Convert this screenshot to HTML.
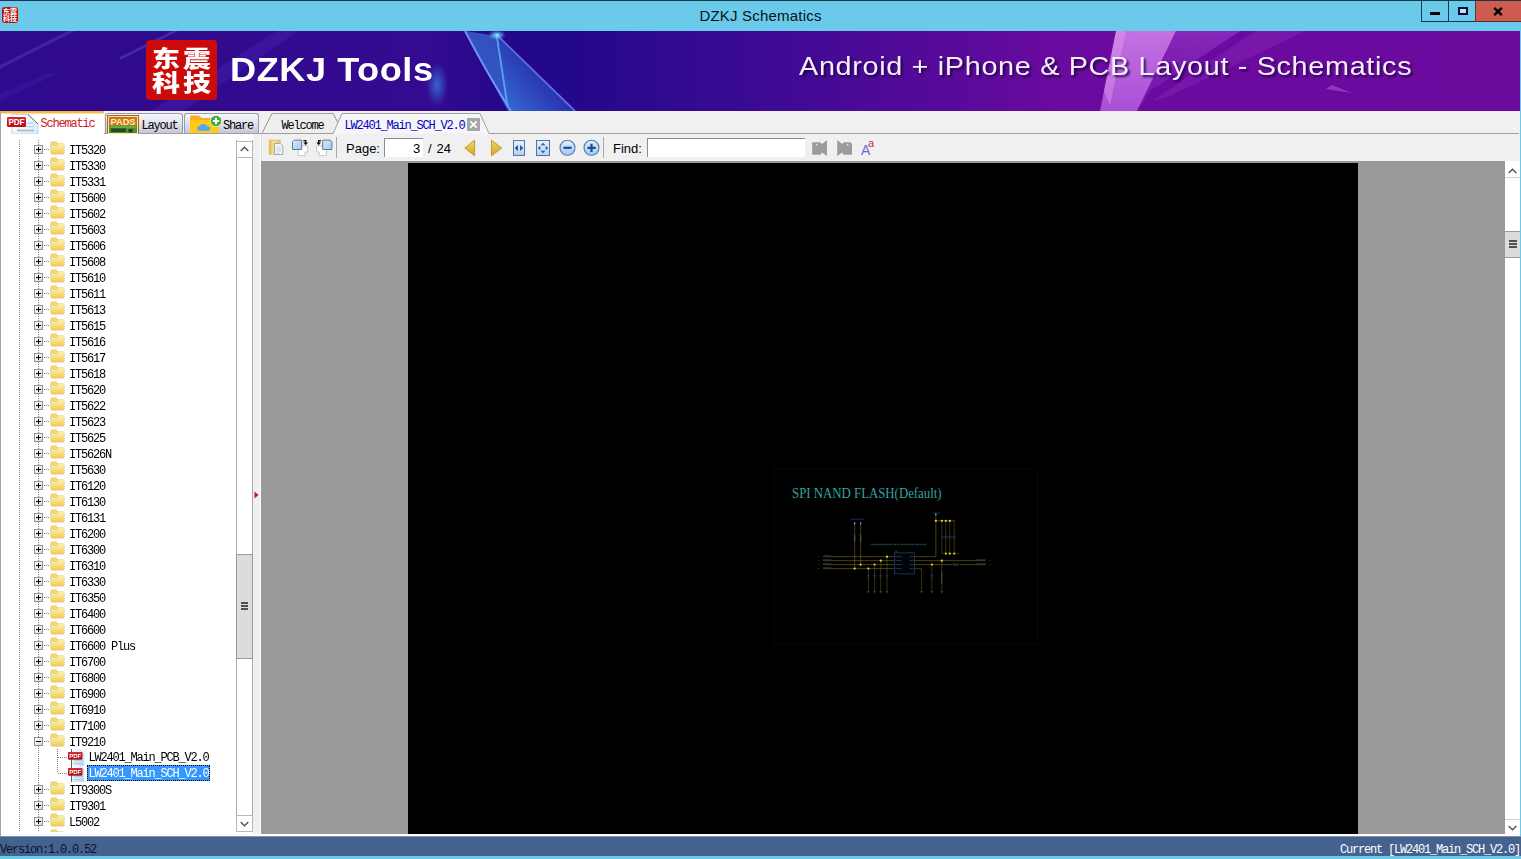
<!DOCTYPE html>
<html><head><meta charset="utf-8"><title>DZKJ Schematics</title>
<style>
html,body{margin:0;padding:0}
body{width:1521px;height:859px;overflow:hidden;position:relative;background:#6bc9ea;font-family:"Liberation Sans",sans-serif}
.abs,#main>*,#tree>*,.row>*{position:absolute}
i{display:block;font-style:normal}
svg{display:block;overflow:visible}
#frame-top{left:0;top:0;width:1521px;height:1px;background:#16394a}
#title{left:0;top:0;width:1521px;height:31px;line-height:31.5px;text-align:center;font-size:15px;letter-spacing:.2px;color:#04141c}
#appicon{left:2px;top:7px;width:16px;height:16px;box-sizing:border-box;padding-top:1px;border-radius:3px;background:#b5100d;color:#fff;font:bold 7px/7px "Liberation Sans","Noto Sans CJK SC",sans-serif;text-align:center;overflow:hidden}
#wbtn{left:1421px;top:1px;width:98px;height:21px}
#banner{left:0;top:31px;width:1519.6px;height:80px;overflow:hidden;background:linear-gradient(90deg,#2e0a8c 0%,#340a90 28%,#24088a 33%,#24088a 38%,#340a90 46%,#420a94 53%,#580a9a 62.5%,#6a0a9e 70%,#6c0a9e 100%)}
#main{left:0;top:111px;width:1519.6px;height:725px;background:#f0f0f0}
#status{left:0;top:836px;width:1521px;height:20px;background:#45628f;box-shadow:inset 0 1px 0 #7f94b4,inset 0 -1px 0 #3c6a8c}
.mono{font-family:"Liberation Mono",monospace;font-size:12px;letter-spacing:-1.2px;white-space:pre}
#status span{position:absolute;top:6px;line-height:16px}
/* left tabs */
.ltab{top:2px;height:20px;box-sizing:border-box;border:1px solid #9a9aa8;border-bottom:none;border-radius:3px 3px 0 0;background:linear-gradient(#f6f6fb,#e4e4ee 45%,#c6c6da)}
.ltab span,.dtab span{position:absolute;line-height:16px}
#tab1{left:0;top:0;width:104px;height:23px;background:linear-gradient(#f8ad38 0,#fcbc4a 2px,#ffe4a8 2.6px,#fff 3.2px);border:none;border-radius:0}
/* tree */
#treebg{left:1px;top:23px;width:252px;height:702px;background:#fff}
#tree{left:1px;top:29px;width:252px;height:692px;overflow:hidden;will-change:transform}
.row{left:0;height:16px;width:236px}
.bx{left:33px;top:3px;width:9px;height:9px;box-sizing:border-box;border:1px solid #919191;background:linear-gradient(135deg,#fff,#d8d8d8)}
.bx:before{content:"";position:absolute;left:1px;top:3px;width:5px;height:1px;background:#000}
.plus:after{content:"";position:absolute;left:3px;top:1px;width:1px;height:5px;background:#000}
.hd{left:43px;top:7px;width:6px;height:1px;background:repeating-linear-gradient(90deg,#808080 0 1px,transparent 1px 2px)}
.hd2{left:57px;top:7px;width:10px;height:1px;background:repeating-linear-gradient(90deg,#808080 0 1px,transparent 1px 2px)}
.fo{left:49.6px;top:1.8px;width:13px;height:9.9px;border-radius:1px;background:linear-gradient(#fcf0ae,#f6df80 55%,#eecb5a);box-shadow:0 0 0 .5px #e2c662}
.fo:before{content:"";position:absolute;left:0;top:-1.9px;width:6.4px;height:2.6px;border-radius:1px 1.6px 0 0;background:#f0d878;box-shadow:0 0 0 .5px #e2c662}
.pi{left:67px;top:-1px;width:17px;height:17px}
.lb{left:68px;top:1px;line-height:16px;font-family:"Liberation Mono",monospace;font-size:12px;letter-spacing:-1.2px;white-space:pre;color:#000}
.lb2{left:86px;top:-1px;height:16px;line-height:18px;padding:0 1px 0 1.5px;font-family:"Liberation Mono",monospace;font-size:12px;letter-spacing:-1.2px;white-space:pre;color:#000}
.sel{background:#3399ff;color:#fff;outline:1px dotted #000;outline-offset:-1px}
.vd{width:1px;background:repeating-linear-gradient(180deg,#808080 0 1px,transparent 1px 2px)}

#logo{left:146px;top:9px;width:71px;height:60px;border-radius:4px;background:#cc0a0a;color:#fff;font:900 28px/28px "Liberation Sans","Noto Sans CJK SC",sans-serif;text-align:center}
#logo span{display:block;position:absolute;left:0;width:71px;height:28px;white-space:nowrap;letter-spacing:3px;text-indent:3px;transform:scaleY(.8);transform-origin:50% 50%}
#bt1{left:230px;top:17px;font:bold 33px/44px "Liberation Sans",sans-serif;color:#fff;letter-spacing:.5px;white-space:nowrap;transform:scaleX(1.095);transform-origin:0 0}
#bt2,#bt2s{left:799px;top:14.5px;font:26px/40px "Liberation Sans",sans-serif;color:#f6ecfb;white-space:nowrap;letter-spacing:.6px;transform:scaleX(1.108);transform-origin:0 0}
#bt2s{color:#1a0440;left:801px;top:16.5px;filter:blur(1.2px);opacity:.9}
#tb{left:262px;top:23px;width:1257.6px;height:27px;background:#f0f0f0}
#tb>*{position:absolute}
.tx{top:7px;font:13px/16px "Liberation Sans",sans-serif;color:#000;white-space:nowrap}
#viewer{left:262px;top:50px;width:1257.6px;height:673px;background:#999;overflow:hidden}
#viewer>*{position:absolute}
#page{left:146px;top:2px;width:950px;height:680px;background:#000}
#main>i.wl{background:#fff}
</style></head>
<body>
<svg width="0" height="0" style="position:absolute">
<defs>
<linearGradient id="gfo" x1="0" y1="0" x2="0" y2="1"><stop offset="0" stop-color="#fcf0ae"/><stop offset=".55" stop-color="#f6df80"/><stop offset="1" stop-color="#eecb5a"/></linearGradient>
<linearGradient id="gpg2" x1="0" y1="0" x2="1" y2="1"><stop offset="0" stop-color="#ffffff"/><stop offset="1" stop-color="#ddecf8"/></linearGradient>
<linearGradient id="gpg" x1="0" y1="0" x2="1" y2="1"><stop offset="0" stop-color="#ffffff"/><stop offset="1" stop-color="#b8d8f4"/></linearGradient>
</defs>
</svg>

<div class="abs" id="title">DZKJ Schematics</div>
<div class="abs" id="frame-top"></div>
<div class="abs" id="appicon">东震<br>科技</div>
<div class="abs" id="wbtn">
<i class="abs" style="left:0;top:0;width:28px;height:21px;box-sizing:border-box;border:1px solid #0c3a52;border-top:none"></i>
<i class="abs" style="left:27px;top:0;width:28px;height:21px;box-sizing:border-box;border:1px solid #0c3a52;border-top:none"></i>
<i class="abs" style="left:54px;top:0;width:46px;height:21px;box-sizing:border-box;background:#cf5a4e;border-bottom:1px solid #5a2a24;border-left:1px solid #5a3a34"></i>
<i class="abs" style="left:9px;top:11px;width:10px;height:3px;background:#000"></i>
<i class="abs" style="left:37px;top:6px;width:10px;height:8px;box-sizing:border-box;border:2px solid #0a0a3a;background:#bfe4f4"></i>
<svg class="abs" style="left:72px;top:6px" width="10" height="9" viewBox="0 0 10 9"><path d="M1.2 .8 L8.8 8.2 M8.8 .8 L1.2 8.2" stroke="#000" stroke-width="2.4"/></svg>
</div>
<div class="abs" id="banner">
<svg class="abs" style="left:0;top:0" width="1519" height="80" viewBox="0 0 1519 80">
<defs>
<linearGradient id="bm1" x1="0" y1="0" x2="0" y2="1"><stop offset="0" stop-color="#3a80e0" stop-opacity=".6"/><stop offset="1" stop-color="#3a78e0" stop-opacity=".7"/></linearGradient>
<linearGradient id="bm2" x1="0" y1="1" x2="1" y2=".2"><stop offset="0" stop-color="#3a8ae8" stop-opacity=".85"/><stop offset=".55" stop-color="#2c4cc4" stop-opacity=".7"/><stop offset="1" stop-color="#2a30b0" stop-opacity=".3"/></linearGradient>
<linearGradient id="pk1" x1="0" y1="0" x2="0" y2="1"><stop offset="0" stop-color="#d484ee" stop-opacity=".85"/><stop offset="1" stop-color="#b25ce0" stop-opacity=".85"/></linearGradient>
<linearGradient id="pk2" x1="0" y1="0" x2="0" y2="1"><stop offset="0" stop-color="#a040d0" stop-opacity=".55"/><stop offset="1" stop-color="#8a2ac0" stop-opacity=".25"/></linearGradient>
<radialGradient id="glow"><stop offset="0" stop-color="#3a8ae8" stop-opacity=".7"/><stop offset="1" stop-color="#3a8ae8" stop-opacity="0"/></radialGradient>
<radialGradient id="spark"><stop offset="0" stop-color="#9af0ff" stop-opacity="1"/><stop offset="1" stop-color="#4ac0ff" stop-opacity="0"/></radialGradient>
<filter id="tsh" x="-5%" y="-20%" width="110%" height="150%"><feGaussianBlur stdDeviation="1.2"/></filter>
</defs>
<polygon points="277,0 298,0 183,80 150,80" fill="#5a3ad8" opacity=".22"/>
<polygon points="0,34 0,38 75,0 68,0" fill="#6a5ae0" opacity=".3"/>
<polygon points="120,26 120,29 178,0 172,0" fill="#7a6ae8" opacity=".3"/>
<polygon points="0,62 0,70 60,42 48,42" fill="#5a3ad8" opacity=".15"/>
<ellipse cx="437" cy="54" rx="11" ry="22" fill="url(#glow)"/>
<polygon points="465,0 497,5 507,74 512,80 508,80" fill="url(#bm1)"/>
<polygon points="497,5 575,80 512,80 506,72" fill="url(#bm2)"/>
<path d="M465 0 Q488 44 511 80" stroke="#7a9cf8" stroke-width="2" fill="none" opacity=".9"/>
<path d="M496.5 3 L507.5 75" stroke="#5aa8f8" stroke-width="1.8" fill="none" opacity=".9"/>
<path d="M497 4 L575 80" stroke="#6a7cf0" stroke-width="1.8" fill="none" opacity=".85"/>
<ellipse cx="497" cy="4" rx="9" ry="5" fill="url(#spark)"/>
<polygon points="1116,0 1176,0 1137,80 1100,80" fill="url(#pk1)"/>
<polygon points="1176,0 1240,0 1150,60 1137,80" fill="url(#pk2)"/>
<polygon points="1255,0 1305,0 1168,66 1152,70" fill="#9a3ac8" opacity=".28"/>
<polygon points="1326,58 1352,62 1332,54" fill="#b050d8" opacity=".6"/>
<polygon points="1104,60 1116,0 1126,0 1110,74" fill="#e8b0f4" opacity=".35"/>
</svg>
<i class="abs" id="logo"><span style="top:6px">东震</span><span style="top:30px">科技</span></i>
<div class="abs" id="bt1">DZKJ Tools</div>
<div class="abs" id="bt2s">Android + iPhone &amp; PCB Layout - Schematics</div>
<div class="abs" id="bt2">Android + iPhone &amp; PCB Layout - Schematics</div>
</div>
<div class="abs" id="main">
<i style="left:104px;top:22px;width:156px;height:1px;background:#a0a0a8"></i>
<div id="tab1" class="ltab" style="box-sizing:border-box"><svg class="abs" style="left:6px;top:2px" width="34" height="22" viewBox="0 0 34 22">
<path d="M6 1.5 H22 L32 11 V21 H6 Z" fill="url(#gpg2)" stroke="#c4d4e4" stroke-width="1"/>
<path d="M22 1.5 L32 11" stroke="#5a6a7a" stroke-width="1"/>
<path d="M21 10h7M19 13.5h9" stroke="#b4daf2" stroke-width="1.6"/><path d="M11 17.5h17" stroke="#a8b8c8" stroke-width="1.6"/>
<rect x="1" y="4" width="19" height="10" rx="1.5" fill="#c01018"/>
<rect x="1" y="4" width="19" height="4" rx="1.5" fill="#d83038" opacity=".7"/>
<text x="10.5" y="12.3" font-family="Liberation Sans,sans-serif" font-size="9" font-weight="bold" fill="#fff" text-anchor="middle" textLength="16" lengthAdjust="spacingAndGlyphs">PDF</text>
</svg><span class="mono" style="left:40.5px;top:5px;color:#c8202a">Schematic</span></div>
<div id="tab2" class="ltab" style="left:105px;width:78px"><svg class="abs" style="left:1px;top:1px" width="32" height="18" viewBox="0 0 32 18">
<rect x="0" y="0" width="32" height="18" fill="#b4601a"/>
<rect x="1.5" y="1.5" width="29" height="17" fill="#d2741e" stroke="#f7e6a0" stroke-width="1"/>
<rect x="2" y="10.6" width="28" height="7.4" fill="#4c9432"/>
<rect x="4" y="13.4" width="15" height="3.6" fill="#25482a"/><rect x="21.5" y="14" width="4" height="3.4" fill="#1e3a22"/>
<path d="M3 12h26" stroke="#7cc45a" stroke-width="1"/>
<text x="16" y="10" font-family="Liberation Sans,sans-serif" font-size="9.5" font-weight="bold" fill="#fdf2b4" text-anchor="middle" textLength="25" lengthAdjust="spacingAndGlyphs">PADS</text>
</svg><span class="mono" style="left:35.5px;top:4px;color:#000">Layout</span></div>
<div id="tab3" class="ltab" style="left:184px;width:75px"><svg class="abs" style="left:4px;top:0px" width="34" height="19" viewBox="0 0 34 19">
<path d="M1 3 Q1 1.5 2.5 1.5 H10 L12.5 4 H28 Q29.5 4 29.5 5.5 V19 H1 Z" fill="#f9ae22"/>
<path d="M1 6 H29.5 V19 H1 Z" fill="#ffca1c"/>
<path d="M10.5 16.8 Q8 16.8 8 14.6 Q8 12.8 10.2 12.6 Q11 10 14.2 10 Q17.4 10 18.2 12.4 Q21.2 12.4 21.2 14.6 Q21.2 16.8 18.8 16.8 Z" fill="#4ea6f4"/>
<circle cx="27" cy="7" r="5.6" fill="#3aa83c" stroke="#e8f4e0" stroke-width=".8"/>
<path d="M27 3.8v6.4M23.8 7h6.4" stroke="#fff" stroke-width="2"/>
</svg><span class="mono" style="left:38px;top:4px;color:#000">Share</span></div>
<i id="treebg"></i>
<i style="left:0;top:1px;width:1px;height:724px;background:#9ca6ae;z-index:3"></i>
<div id="tree">
<i class="vd" style="left:18px;top:0px;height:693px"></i>
<i class="vd" style="left:37px;top:0px;height:693px"></i>
<div class="row" style="top:2px"><i class="hd"></i><i class="bx plus"></i><i class="fo"></i><span class="lb">IT5320</span></div>
<div class="row" style="top:18px"><i class="hd"></i><i class="bx plus"></i><i class="fo"></i><span class="lb">IT5330</span></div>
<div class="row" style="top:34px"><i class="hd"></i><i class="bx plus"></i><i class="fo"></i><span class="lb">IT5331</span></div>
<div class="row" style="top:50px"><i class="hd"></i><i class="bx plus"></i><i class="fo"></i><span class="lb">IT5600</span></div>
<div class="row" style="top:66px"><i class="hd"></i><i class="bx plus"></i><i class="fo"></i><span class="lb">IT5602</span></div>
<div class="row" style="top:82px"><i class="hd"></i><i class="bx plus"></i><i class="fo"></i><span class="lb">IT5603</span></div>
<div class="row" style="top:98px"><i class="hd"></i><i class="bx plus"></i><i class="fo"></i><span class="lb">IT5606</span></div>
<div class="row" style="top:114px"><i class="hd"></i><i class="bx plus"></i><i class="fo"></i><span class="lb">IT5608</span></div>
<div class="row" style="top:130px"><i class="hd"></i><i class="bx plus"></i><i class="fo"></i><span class="lb">IT5610</span></div>
<div class="row" style="top:146px"><i class="hd"></i><i class="bx plus"></i><i class="fo"></i><span class="lb">IT5611</span></div>
<div class="row" style="top:162px"><i class="hd"></i><i class="bx plus"></i><i class="fo"></i><span class="lb">IT5613</span></div>
<div class="row" style="top:178px"><i class="hd"></i><i class="bx plus"></i><i class="fo"></i><span class="lb">IT5615</span></div>
<div class="row" style="top:194px"><i class="hd"></i><i class="bx plus"></i><i class="fo"></i><span class="lb">IT5616</span></div>
<div class="row" style="top:210px"><i class="hd"></i><i class="bx plus"></i><i class="fo"></i><span class="lb">IT5617</span></div>
<div class="row" style="top:226px"><i class="hd"></i><i class="bx plus"></i><i class="fo"></i><span class="lb">IT5618</span></div>
<div class="row" style="top:242px"><i class="hd"></i><i class="bx plus"></i><i class="fo"></i><span class="lb">IT5620</span></div>
<div class="row" style="top:258px"><i class="hd"></i><i class="bx plus"></i><i class="fo"></i><span class="lb">IT5622</span></div>
<div class="row" style="top:274px"><i class="hd"></i><i class="bx plus"></i><i class="fo"></i><span class="lb">IT5623</span></div>
<div class="row" style="top:290px"><i class="hd"></i><i class="bx plus"></i><i class="fo"></i><span class="lb">IT5625</span></div>
<div class="row" style="top:306px"><i class="hd"></i><i class="bx plus"></i><i class="fo"></i><span class="lb">IT5626N</span></div>
<div class="row" style="top:322px"><i class="hd"></i><i class="bx plus"></i><i class="fo"></i><span class="lb">IT5630</span></div>
<div class="row" style="top:338px"><i class="hd"></i><i class="bx plus"></i><i class="fo"></i><span class="lb">IT6120</span></div>
<div class="row" style="top:354px"><i class="hd"></i><i class="bx plus"></i><i class="fo"></i><span class="lb">IT6130</span></div>
<div class="row" style="top:370px"><i class="hd"></i><i class="bx plus"></i><i class="fo"></i><span class="lb">IT6131</span></div>
<div class="row" style="top:386px"><i class="hd"></i><i class="bx plus"></i><i class="fo"></i><span class="lb">IT6200</span></div>
<div class="row" style="top:402px"><i class="hd"></i><i class="bx plus"></i><i class="fo"></i><span class="lb">IT6300</span></div>
<div class="row" style="top:418px"><i class="hd"></i><i class="bx plus"></i><i class="fo"></i><span class="lb">IT6310</span></div>
<div class="row" style="top:434px"><i class="hd"></i><i class="bx plus"></i><i class="fo"></i><span class="lb">IT6330</span></div>
<div class="row" style="top:450px"><i class="hd"></i><i class="bx plus"></i><i class="fo"></i><span class="lb">IT6350</span></div>
<div class="row" style="top:466px"><i class="hd"></i><i class="bx plus"></i><i class="fo"></i><span class="lb">IT6400</span></div>
<div class="row" style="top:482px"><i class="hd"></i><i class="bx plus"></i><i class="fo"></i><span class="lb">IT6600</span></div>
<div class="row" style="top:498px"><i class="hd"></i><i class="bx plus"></i><i class="fo"></i><span class="lb">IT6600 Plus</span></div>
<div class="row" style="top:514px"><i class="hd"></i><i class="bx plus"></i><i class="fo"></i><span class="lb">IT6700</span></div>
<div class="row" style="top:530px"><i class="hd"></i><i class="bx plus"></i><i class="fo"></i><span class="lb">IT6800</span></div>
<div class="row" style="top:546px"><i class="hd"></i><i class="bx plus"></i><i class="fo"></i><span class="lb">IT6900</span></div>
<div class="row" style="top:562px"><i class="hd"></i><i class="bx plus"></i><i class="fo"></i><span class="lb">IT6910</span></div>
<div class="row" style="top:578px"><i class="hd"></i><i class="bx plus"></i><i class="fo"></i><span class="lb">IT7100</span></div>
<div class="row" style="top:594px"><i class="hd"></i><i class="bx minus"></i><i class="fo"></i><span class="lb">IT9210</span></div>
<div class="row" style="top:610px"><i class="hd2"></i><svg class="pi" viewBox="0 0 17 17"><path d="M3.5 0 H11.5 L16 4.5 V17 H3.5 Z" fill="url(#gpg)"/><path d="M11.5 0 L16 4.5 V17" fill="none" stroke="#c4dcf0" stroke-width=".8"/><path d="M3.5 0 V17" stroke="#60606c" stroke-width="1"/><path d="M6 11.5h9M6 14.5h9" stroke="#a4d0ec" stroke-width="1.2"/><rect x="0" y="3" width="14.4" height="7.7" rx="1" fill="#b4121a"/><rect x="0" y="3" width="14.4" height="3.2" rx="1" fill="#d83a40" opacity=".6"/><text x="7.2" y="9.3" font-family="Liberation Sans,sans-serif" font-size="6.2" font-weight="bold" fill="#fff" text-anchor="middle" textLength="12" lengthAdjust="spacingAndGlyphs">PDF</text></svg><span class="lb2">LW2401_Main_PCB_V2.0</span></div>
<div class="row" style="top:626px"><i class="hd2"></i><svg class="pi" viewBox="0 0 17 17"><path d="M3.5 0 H11.5 L16 4.5 V17 H3.5 Z" fill="url(#gpg)"/><path d="M11.5 0 L16 4.5 V17" fill="none" stroke="#c4dcf0" stroke-width=".8"/><path d="M3.5 0 V17" stroke="#60606c" stroke-width="1"/><path d="M6 11.5h9M6 14.5h9" stroke="#a4d0ec" stroke-width="1.2"/><rect x="0" y="3" width="14.4" height="7.7" rx="1" fill="#b4121a"/><rect x="0" y="3" width="14.4" height="3.2" rx="1" fill="#d83a40" opacity=".6"/><text x="7.2" y="9.3" font-family="Liberation Sans,sans-serif" font-size="6.2" font-weight="bold" fill="#fff" text-anchor="middle" textLength="12" lengthAdjust="spacingAndGlyphs">PDF</text></svg><span class="lb2 sel">LW2401_Main_SCH_V2.0</span></div>
<div class="row" style="top:642px"><i class="hd"></i><i class="bx plus"></i><i class="fo"></i><span class="lb">IT9300S</span></div>
<div class="row" style="top:658px"><i class="hd"></i><i class="bx plus"></i><i class="fo"></i><span class="lb">IT9301</span></div>
<div class="row" style="top:674px"><i class="hd"></i><i class="bx plus"></i><i class="fo"></i><span class="lb">L5002</span></div>
<div class="row" style="top:690px"><i class="hd"></i><i class="bx plus"></i><i class="fo"></i><span class="lb"></span></div>
<i class="vd" style="left:56px;top:609px;height:24px"></i>
<i style="left:235px;top:0;width:17px;height:692px;background:#fff;box-sizing:border-box;border-left:1px solid #a8a8a8;border-right:1px solid #a8a8a8"></i>
<i style="left:235px;top:1px;width:17px;height:17px;box-sizing:border-box;border:1px solid #b8b8b8;background:#fff"></i>
<svg style="left:239px;top:6px" width="9" height="6" viewBox="0 0 9 6"><path d="M.7 5 L4.5 1.2 L8.3 5" fill="none" stroke="#505050" stroke-width="1.3"/></svg>
<i style="left:235px;top:675px;width:17px;height:17px;box-sizing:border-box;border:1px solid #b8b8b8;background:#fff"></i>
<svg style="left:239px;top:681px" width="9" height="6" viewBox="0 0 9 6"><path d="M.7 1 L4.5 4.8 L8.3 1" fill="none" stroke="#505050" stroke-width="1.3"/></svg>
<i style="left:235px;top:414px;width:17px;height:105px;box-sizing:border-box;border:1px solid #9a9a9a;background:#dcdcdc"></i>
<i style="left:240px;top:462px;width:7px;height:2px;background:#505050;box-shadow:0 3px 0 #505050,0 6px 0 #505050"></i>
</div>
<i style="left:253px;top:23px;width:9px;height:702px;background:#f0f0f0"></i>
<i style="left:260px;top:23px;width:1px;height:702px;background:#fff"></i>
<i style="left:261px;top:50px;width:1px;height:673px;background:#999"></i>
<i style="left:261px;top:23px;width:1px;height:27px;background:#e0e0e0"></i>
<svg style="left:254px;top:380px" width="5" height="8" viewBox="0 0 5 8"><path d="M.5 .5 L4.5 4 L.5 7.5 Z" fill="#c81818"/></svg>
<svg style="left:258px;top:0" width="240" height="24" viewBox="0 0 240 24">
<path d="M4 22.5 H0 M4 22.5 L14 2.5 H75 L79.5 11" fill="#f0f0f0" stroke="#a0a0a0" stroke-width="1"/>
<path d="M4 22.5 L14 2.5 H75 L79.5 11 L75 22.5 Z" fill="#eeeeee" stroke="none"/>
<path d="M4 22.5 L14 2.5 H75 L79.5 11" fill="none" stroke="#a0a0a0" stroke-width="1"/>
<path d="M75 22.5 L84 2.5 H222 L231 22.5" fill="#f6f6f6" stroke="#a0a0a0" stroke-width="1"/>
<path d="M0 22.5 H75.3 M231 22.5 H240" stroke="#a0a0a0" stroke-width="1"/>
<rect x="209" y="7" width="13" height="13" fill="#a6a6a6"/>
<path d="M212.3 10.3 l6.4 6.4 M218.7 10.3 l-6.4 6.4" stroke="#fff" stroke-width="1.8"/>
</svg>
<i style="left:498px;top:22px;width:1021px;height:1px;background:#a0a0a0"></i>
<span class="mono" style="left:281.5px;top:7px;line-height:16px;color:#000">Welcome</span>
<span class="mono" style="left:344.5px;top:7px;line-height:16px;color:#0000c8">LW2401_Main_SCH_V2.0</span>
<div id="tb">
<svg style="left:6px;top:4px" width="18" height="18" viewBox="0 0 18 18">
<defs><linearGradient id="gy" x1="0" y1="0" x2="1" y2="0"><stop offset="0" stop-color="#e2b654"/><stop offset=".35" stop-color="#f5dc92"/><stop offset="1" stop-color="#ecc870"/></linearGradient>
<linearGradient id="gbl" x1="0" y1="0" x2="1" y2="1"><stop offset="0" stop-color="#dcebf8"/><stop offset="1" stop-color="#a4c4e4"/></linearGradient></defs>
<path d="M1.2 2 H12.3 V6 H8 V16.2 H1.2 Z" fill="url(#gy)" stroke="#d9ad4a" stroke-width=".5"/>
<path d="M6.6 5.6 H12.4 L14.8 8 V16.5 H6.6 Z" fill="#fdfdfd" stroke="#8792a6" stroke-width=".8"/>
<path d="M8.2 9h4.8M8.2 11h5M8.2 13h5M8.2 15h3.4" stroke="#a8b2c4" stroke-width=".7"/>
</svg>
<svg style="left:30px;top:4px" width="18" height="18" viewBox="0 0 18 18">
<path d="M6 8 H15.8 V14 H13.2 V17.6 H6 Z" fill="#fdfdfd" stroke="#bcbcbc" stroke-width=".8"/>
<path d="M.5 3.8 L2.2 2.1 H9.7 V11.5 H.5 Z" fill="url(#gbl)" stroke="#5c7c9e" stroke-width="1"/>
<path d="M11.4 2.6 H13.7 V5" fill="none" stroke="#111" stroke-width="1.4"/><path d="M11.4 4.6 L13.7 7.2 L16 4.6 Z" fill="#111"/>
</svg>
<svg style="left:54px;top:4px" width="18" height="18" viewBox="0 0 18 18">
<path d="M10.4 8 H.6 V14 H3.2 V17.6 H10.4 Z" fill="#fdfdfd" stroke="#bcbcbc" stroke-width=".8"/>
<path d="M15.9 3.8 L14.2 2.1 H6.7 V11.5 H15.9 Z" fill="url(#gbl)" stroke="#5c7c9e" stroke-width="1"/>
<path d="M5 2.6 H2.7 V5" fill="none" stroke="#111" stroke-width="1.4"/><path d="M.4 4.6 L2.7 7.2 L5 4.6 Z" fill="#111"/>
</svg>
<i style="left:74px;top:3px;width:1px;height:21px;background:#a8a8a8"></i>
<span class="tx" style="left:84px">Page:</span>
<i style="left:122px;top:4px;width:39px;height:19px;box-sizing:border-box;background:#fff;border-top:1px solid #8c8c8c;border-left:1px solid #8c8c8c"></i>
<span class="tx" style="left:151px">3</span>
<span class="tx" style="left:166px;word-spacing:1.3px">/ 24</span>
<svg style="left:202px;top:5px" width="13" height="18" viewBox="0 0 13 18"><defs><linearGradient id="gd" x1="0" y1="0" x2="0" y2="1"><stop offset="0" stop-color="#f0d870"/><stop offset="1" stop-color="#d0a428"/></linearGradient></defs><path d="M10.6 1.2 V16.8 L.8 9 Z" fill="url(#gd)" stroke="#c49a28" stroke-width="1"/></svg>
<svg style="left:228px;top:5px" width="13" height="18" viewBox="0 0 13 18"><path d="M1.5 1.2 V16.8 L11.8 9 Z" fill="url(#gd)" stroke="#c49a28" stroke-width="1"/></svg>
<svg style="left:251px;top:6px" width="12" height="16" viewBox="0 0 13 17"><defs><linearGradient id="gb" x1="0" y1="0" x2="0" y2="1"><stop offset="0" stop-color="#e8f2fc"/><stop offset="1" stop-color="#b4d2f0"/></linearGradient></defs><rect x=".5" y=".5" width="12" height="16" fill="url(#gb)" stroke="#4a6a9c"/><path d="M5.4 5.3 V11.7 L1.8 8.5 Z M7.6 5.3 V11.7 L11.2 8.5 Z" fill="#2458a0"/></svg>
<svg style="left:274px;top:6px" width="14" height="16" viewBox="0 0 15 17"><rect x=".5" y=".5" width="14" height="16" fill="url(#gb)" stroke="#4a6a9c"/><path d="M7.5 3 L10 5.6 H5 Z M7.5 14 L10 11.4 H5 Z M2 8.5 L4.6 6 V11 Z M13 8.5 L10.4 6 V11 Z" fill="#2a5aa0"/></svg>
<svg style="left:296px;top:4px" width="19" height="19" viewBox="0 0 19 19"><defs><linearGradient id="gc" x1="0" y1="0" x2="0" y2="1"><stop offset="0" stop-color="#e4f0fc"/><stop offset="1" stop-color="#9cc8f4"/></linearGradient></defs><circle cx="9.5" cy="9.8" r="7.5" fill="url(#gc)" stroke="#5a7cb0" stroke-width="1.1"/><path d="M5.4 9.8 H13.6" stroke="#1c4c90" stroke-width="2.2"/></svg>
<svg style="left:320px;top:4px" width="19" height="19" viewBox="0 0 19 19"><circle cx="9.5" cy="9.8" r="7.5" fill="url(#gc)" stroke="#5a7cb0" stroke-width="1.1"/><path d="M5.4 9.8 H13.6 M9.5 5.7 V13.9" stroke="#1c4c90" stroke-width="2.2"/></svg>
<i style="left:341px;top:3px;width:1px;height:21px;background:#a8a8a8"></i>
<span class="tx" style="left:351px">Find:</span>
<i style="left:385px;top:4px;width:158px;height:19px;box-sizing:border-box;background:#fff;border-top:1px solid #8c8c8c;border-left:1px solid #8c8c8c"></i>
<svg style="left:550px;top:5px" width="17" height="18" viewBox="0 0 17 18"><path d="M.2 3.3 H8.2 L10 5 L15 .9 V16.9 L10 13.5 L8.8 15.7 H.2 Z" fill="#9c9c9c"/><circle cx="4.6" cy="5.6" r=".9" fill="#e8e8e8"/></svg>
<svg style="left:575px;top:5px" width="17" height="18" viewBox="0 0 17 18"><path d="M15 5 L13.4 3.3 H7 L5.2 5 L.2 .9 V16.9 L5.2 13.5 L6.4 15.7 H15 Z" fill="#9c9c9c"/><circle cx="10.6" cy="5.6" r=".9" fill="#e8e8e8"/></svg>
<span class="abs" style="left:599px;top:9px;font:14px/15px 'Liberation Sans',sans-serif;color:#7466d4">A</span>
<span class="abs" style="left:606px;top:4px;font:11px/10px 'Liberation Sans',sans-serif;color:#d0206c">a</span>
</div>
<div id="viewer">
<i id="page"></i>
<svg style="left:498px;top:299px" width="290" height="190" viewBox="0 0 1311 859" fill="none">
<rect x="65" y="40" width="1190" height="795" fill="none" stroke="#200608" stroke-width="3"/>
<path d="M285 437 L607 437" stroke="#b8aa28" stroke-width="2.2" opacity="0.8"/>
<path d="M285 455 L607 455" stroke="#b8aa28" stroke-width="2.2" opacity="0.8"/>
<path d="M285 473 L607 473" stroke="#b8aa28" stroke-width="2.2" opacity="0.8"/>
<path d="M285 491 L607 491" stroke="#b8aa28" stroke-width="2.2" opacity="0.8"/>
<rect x="607" y="420" width="90" height="95" fill="#02040a" stroke="#34588c" stroke-width="2.5"/>
<path d="M612 437 L640 437" stroke="#2a6a8a" stroke-width="3" opacity="0.8"/>
<path d="M675 437 L692 437" stroke="#2a6a8a" stroke-width="3" opacity="0.8"/>
<path d="M612 455 L640 455" stroke="#2a6a8a" stroke-width="3" opacity="0.8"/>
<path d="M675 455 L692 455" stroke="#2a6a8a" stroke-width="3" opacity="0.8"/>
<path d="M612 473 L640 473" stroke="#2a6a8a" stroke-width="3" opacity="0.8"/>
<path d="M675 473 L692 473" stroke="#2a6a8a" stroke-width="3" opacity="0.8"/>
<path d="M612 491 L640 491" stroke="#2a6a8a" stroke-width="3" opacity="0.8"/>
<path d="M675 491 L692 491" stroke="#2a6a8a" stroke-width="3" opacity="0.8"/>
<path d="M428 283 L428 491" stroke="#b8aa28" stroke-width="2.2" opacity="0.75"/>
<path d="M455 283 L455 473" stroke="#b8aa28" stroke-width="2.2" opacity="0.75"/>
<path d="M428 338 l-4 4 l8 6 l-8 6 l8 6 l-8 6 l4 5" fill="none" stroke="#8a8a60" stroke-width="2"/>
<path d="M424 290 L428 278 L432 290 Z" fill="#7ab0e8"/>
<path d="M455 338 l-4 4 l8 6 l-8 6 l8 6 l-8 6 l4 5" fill="none" stroke="#8a8a60" stroke-width="2"/>
<path d="M451 290 L455 278 L459 290 Z" fill="#7ab0e8"/>
<path d="M410 268 L470 268" stroke="#2c4a9a" stroke-width="3" opacity="0.9"/>
<circle cx="428" cy="491" r="5" fill="#e8d82a"/>
<circle cx="455" cy="473" r="5" fill="#e8d82a"/>
<circle cx="490" cy="491" r="5" fill="#e8d82a"/>
<circle cx="518" cy="473" r="5" fill="#e8d82a"/>
<circle cx="546" cy="455" r="5" fill="#e8d82a"/>
<circle cx="574" cy="437" r="5" fill="#e8d82a"/>
<path d="M490 491 L490 598" stroke="#b8aa28" stroke-width="2.2" opacity="0.6"/>
<path d="M484 522 L496 522" stroke="#2c4a9a" stroke-width="2.5" opacity="0.9"/>
<path d="M484 530 L496 530" stroke="#2c4a9a" stroke-width="2.5" opacity="0.9"/>
<path d="M485 594 L495 594 L490 602 Z" fill="none" stroke="#6a7a6a" stroke-width="1.5"/>
<path d="M518 473 L518 598" stroke="#b8aa28" stroke-width="2.2" opacity="0.6"/>
<path d="M512 522 L524 522" stroke="#2c4a9a" stroke-width="2.5" opacity="0.9"/>
<path d="M512 530 L524 530" stroke="#2c4a9a" stroke-width="2.5" opacity="0.9"/>
<path d="M513 594 L523 594 L518 602 Z" fill="none" stroke="#6a7a6a" stroke-width="1.5"/>
<path d="M546 455 L546 598" stroke="#b8aa28" stroke-width="2.2" opacity="0.6"/>
<path d="M540 522 L552 522" stroke="#2c4a9a" stroke-width="2.5" opacity="0.9"/>
<path d="M540 530 L552 530" stroke="#2c4a9a" stroke-width="2.5" opacity="0.9"/>
<path d="M541 594 L551 594 L546 602 Z" fill="none" stroke="#6a7a6a" stroke-width="1.5"/>
<path d="M574 437 L574 598" stroke="#b8aa28" stroke-width="2.2" opacity="0.6"/>
<path d="M568 522 L580 522" stroke="#2c4a9a" stroke-width="2.5" opacity="0.9"/>
<path d="M568 530 L580 530" stroke="#2c4a9a" stroke-width="2.5" opacity="0.9"/>
<path d="M569 594 L579 594 L574 602 Z" fill="none" stroke="#6a7a6a" stroke-width="1.5"/>
<path d="M697 437 L795 437" stroke="#b8aa28" stroke-width="2.2" opacity="0.8"/>
<path d="M795 437 L795 245" stroke="#b8aa28" stroke-width="2.2" opacity="0.8"/>
<path d="M795 275 L880 275" stroke="#b8aa28" stroke-width="2.2" opacity="0.85"/>
<path d="M822 275 L822 423" stroke="#b8aa28" stroke-width="2.2" opacity="0.6"/>
<path d="M840 275 L840 423" stroke="#b8aa28" stroke-width="2.2" opacity="0.6"/>
<path d="M858 275 L858 423" stroke="#b8aa28" stroke-width="2.2" opacity="0.6"/>
<path d="M878 275 L878 423" stroke="#b8aa28" stroke-width="2.2" opacity="0.6"/>
<path d="M822 345 L885 345" stroke="#2c4a9a" stroke-width="2.5" opacity="0.8"/>
<path d="M822 352 L885 352" stroke="#2c4a9a" stroke-width="2.5" opacity="0.8"/>
<circle cx="795" cy="275" r="5" fill="#e8d82a"/>
<circle cx="822" cy="275" r="5" fill="#e8d82a"/>
<circle cx="840" cy="275" r="5" fill="#e8d82a"/>
<circle cx="858" cy="275" r="5" fill="#e8d82a"/>
<circle cx="840" cy="423" r="5" fill="#e8d82a"/>
<circle cx="858" cy="423" r="5" fill="#e8d82a"/>
<circle cx="878" cy="423" r="5" fill="#e8d82a"/>
<path d="M822 423 L900 423" stroke="#b8aa28" stroke-width="2.2" opacity="0.5"/>
<path d="M780 240 L812 240" stroke="#2c4a9a" stroke-width="3" opacity="0.9"/>
<path d="M791 250 L795 238 L799 250 Z" fill="#7ab0e8"/>
<path d="M697 455 L1020 455" stroke="#b8aa28" stroke-width="2.2" opacity="0.8"/>
<path d="M697 473 L868 473" stroke="#b8aa28" stroke-width="2.2" opacity="0.8"/>
<path d="M905 473 L1020 473" stroke="#b8aa28" stroke-width="2.2" opacity="0.8"/>
<path d="M868 473 l4 -5 l6 10 l6 -10 l6 10 l6 -10 l5 5" fill="none" stroke="#9a9a70" stroke-width="2"/>
<path d="M697 491 L730 491" stroke="#b8aa28" stroke-width="2.2" opacity="0.7"/>
<path d="M730 491 L730 598" stroke="#b8aa28" stroke-width="2.2" opacity="0.6"/>
<path d="M725 594 L735 594 L730 602 Z" fill="none" stroke="#6a7a6a" stroke-width="1.5"/>
<path d="M777 473 L777 598" stroke="#b8aa28" stroke-width="2.2" opacity="0.6"/>
<path d="M772 594 L782 594 L777 602 Z" fill="none" stroke="#6a7a6a" stroke-width="1.5"/>
<path d="M822 455 L822 598" stroke="#b8aa28" stroke-width="2.2" opacity="0.6"/>
<path d="M817 594 L827 594 L822 602 Z" fill="none" stroke="#6a7a6a" stroke-width="1.5"/>
<circle cx="777" cy="473" r="5" fill="#e8d82a"/>
<circle cx="822" cy="455" r="5" fill="#e8d82a"/>
<path d="M771 522 L783 522" stroke="#2c4a9a" stroke-width="2.5" opacity="0.9"/>
<path d="M771 530 L783 530" stroke="#2c4a9a" stroke-width="2.5" opacity="0.9"/>
<path d="M822 505 L822 560" stroke="#2a7a8a" stroke-width="4" opacity="0.7"/>
<path d="M285 432 L322 432" stroke="#2c4a9a" stroke-width="4" opacity="0.55"/>
<path d="M258 437 L270 437" stroke="#5a5a5a" stroke-width="2" opacity="0.6"/>
<path d="M285 450 L322 450" stroke="#2c4a9a" stroke-width="4" opacity="0.55"/>
<path d="M258 455 L270 455" stroke="#5a5a5a" stroke-width="2" opacity="0.6"/>
<path d="M285 468 L322 468" stroke="#2c4a9a" stroke-width="4" opacity="0.55"/>
<path d="M258 473 L270 473" stroke="#5a5a5a" stroke-width="2" opacity="0.6"/>
<path d="M285 486 L322 486" stroke="#2c4a9a" stroke-width="4" opacity="0.55"/>
<path d="M258 491 L270 491" stroke="#5a5a5a" stroke-width="2" opacity="0.6"/>
<path d="M975 450 L1022 450" stroke="#2c4a9a" stroke-width="4" opacity="0.55"/>
<path d="M1034 455 L1046 455" stroke="#5a5a5a" stroke-width="2" opacity="0.6"/>
<path d="M975 468 L1022 468" stroke="#2c4a9a" stroke-width="4" opacity="0.55"/>
<path d="M1034 473 L1046 473" stroke="#5a5a5a" stroke-width="2" opacity="0.6"/>
<path d="M500 382 H755" stroke="#2a8a8a" stroke-width="7" stroke-dasharray="5 2 9 2 3 2 7 3" opacity=".5"/>
<path d="M610 412 L622 412" stroke="#2a8a8a" stroke-width="4" opacity="0.6"/>
<text x="145" y="172" font-family="Liberation Serif,serif" font-size="63" fill="#35a2a2" textLength="676" lengthAdjust="spacingAndGlyphs">SPI NAND FLASH(Default)</text>
</svg>
<i style="left:1243px;top:0;width:14.6px;height:673px;background:#fff"></i>
<i style="left:1243px;top:16px;width:15px;height:1px;background:#d0d0d0"></i>
<i style="left:1243px;top:658px;width:15px;height:1px;background:#d0d0d0"></i>
<svg style="left:1246px;top:7px" width="9" height="6" viewBox="0 0 9 6"><path d="M.7 5 L4.5 1.2 L8.3 5" fill="none" stroke="#505050" stroke-width="1.3"/></svg>
<svg style="left:1246px;top:664px" width="9" height="6" viewBox="0 0 9 6"><path d="M.7 1 L4.5 4.8 L8.3 1" fill="none" stroke="#505050" stroke-width="1.3"/></svg>
<i style="left:1243px;top:70px;width:14.6px;height:27px;box-sizing:border-box;border-top:1px solid #9a9a9a;border-bottom:1px solid #9a9a9a;background:#dcdcdc"></i>
<i style="left:1247px;top:79px;width:8px;height:2px;background:#505050;box-shadow:0 3px 0 #505050,0 6px 0 #505050"></i>
</div>
</div>
<i class="abs" style="left:0;top:834px;width:1519px;height:2px;background:#fff"></i>
<div class="abs" id="status"><span class="mono" style="left:0;color:#0a1230">Version:1.0.0.52</span><span class="mono" style="right:1px;color:#fff">Current [LW2401_Main_SCH_V2.0]</span></div>
</body></html>
